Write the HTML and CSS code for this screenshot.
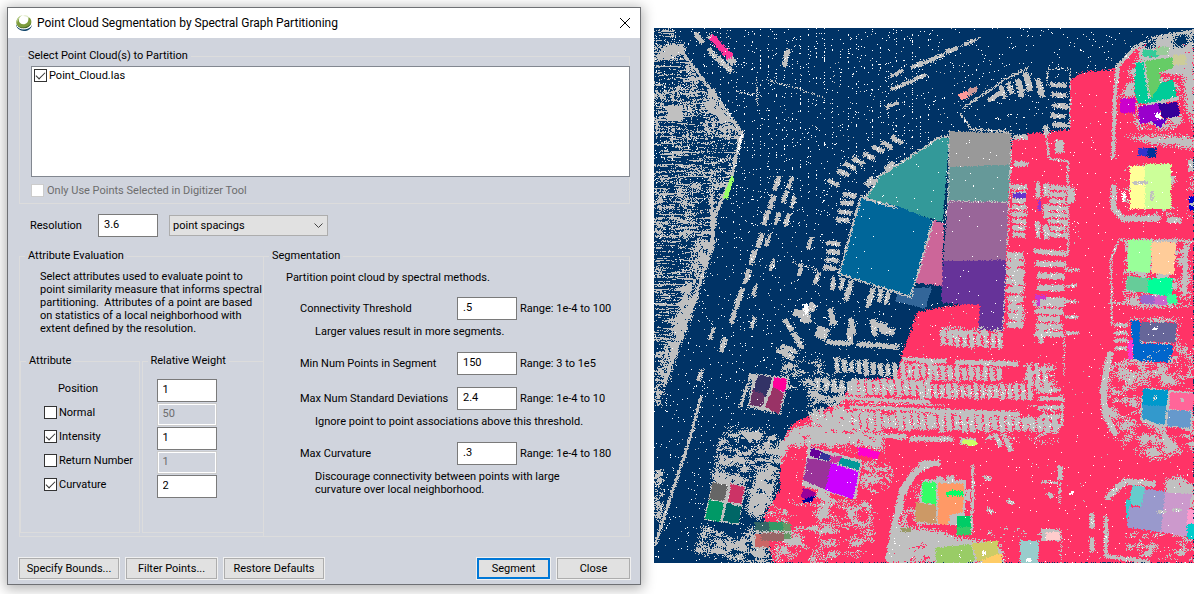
FILE: index.html
```html
<!DOCTYPE html>
<html lang="en">
<head>
<meta charset="utf-8">
<title>Point Cloud Segmentation by Spectral Graph Partitioning</title>
<link rel="stylesheet" href="styles.css">
</head>
<body>
<main class="workspace">
  <section class="dialog" role="dialog" aria-labelledby="dialog-title">
    <header class="titlebar">
      <svg class="logo" viewBox="0 0 16 16" aria-hidden="true">
        <path d="M0 9c1 3 4 5 8 5s7-2 8-4c-1 4-4 6-8 6S0 13 0 9z" fill="#12466b"/>
        <path d="M6 0C1 2-1 7 1 10c3 5 12 4 14-1 1-3 0-6-3-7 1 3 0 6-3 7-4 1-7-2-6-5 0-2 1-3 3-4z" fill="#7d9c3c"/>
        <path d="M7 0C2 1 0 5 1 9c0-3 2-7 6-9z" fill="#c3d59a"/>
        <path d="M7 1c3 0 5 1 6 3l-1-3C10 0 8 0 7 1z" fill="#dfe8c6"/>
        <path d="M1 10c3 4 11 3 14-2-1 6-11 8-14 2z" fill="#47682c"/>
        <path d="M1 11c3 4 10 4 14 0" fill="none" stroke="#fff"/>
      </svg>
      <h1 class="title" id="dialog-title">Point Cloud Segmentation by Spectral Graph Partitioning</h1>
      <button class="close" type="button" aria-label="Close window">
        <svg viewBox="0 0 10 10" aria-hidden="true"><path d="M0 0l10 10M10 0L0 10" stroke="#000" fill="none"/></svg>
      </button>
    </header>
    <form class="content">
      <fieldset class="group source">
        <legend>Select Point Cloud(s) to Partition</legend>
        <div class="list">
          <label class="check"><input type="checkbox" checked>Point_Cloud.las</label>
        </div>
        <label class="check disabled"><input type="checkbox" disabled>Only Use Points Selected in Digitizer Tool</label>
      </fieldset>

      <div class="resolution">
        <label for="resolution">Resolution</label>
        <input class="field" id="resolution" type="text" value="3.6">
        <select class="units" aria-label="Resolution units"><option>point spacings</option></select>
      </div>

      <div class="columns">
        <fieldset class="group evaluation">
          <legend>Attribute Evaluation</legend>
          <p class="intro">Select attributes used to evaluate point to<br>point similarity measure that informs spectral<br>partitioning.&nbsp; Attributes of a point are based<br>on statistics of a local neighborhood with<br>extent defined by the resolution.</p>
          <div class="tables">
            <fieldset class="group attributes">
              <legend>Attribute</legend>
              <label class="position" for="w-position">Position</label>
              <label class="check"><input type="checkbox">Normal</label>
              <label class="check"><input type="checkbox" checked>Intensity</label>
              <label class="check"><input type="checkbox">Return Number</label>
              <label class="check"><input type="checkbox" checked>Curvature</label>
            </fieldset>
            <fieldset class="group weights">
              <legend>Relative Weight</legend>
              <input class="field" id="w-position" type="text" value="1">
              <input class="field" type="text" value="50" aria-label="Normal weight" disabled>
              <input class="field" type="text" value="1" aria-label="Intensity weight">
              <input class="field" type="text" value="1" aria-label="Return number weight" disabled>
              <input class="field" type="text" value="2" aria-label="Curvature weight">
            </fieldset>
          </div>
        </fieldset>

        <fieldset class="group segmentation">
          <legend>Segmentation</legend>
          <p class="lead">Partition point cloud by spectral methods.</p>
          <div class="param">
            <label for="threshold">Connectivity Threshold</label>
            <input class="field" id="threshold" type="text" value=".5">
            <span>Range: 1e-4 to 100</span>
          </div>
          <p class="hint">Larger values result in more segments.</p>
          <div class="param spaced">
            <label for="min-points">Min Num Points in Segment</label>
            <input class="field" id="min-points" type="text" value="150">
            <span>Range: 3 to 1e5</span>
          </div>
          <div class="param spaced">
            <label for="max-dev">Max Num Standard Deviations</label>
            <input class="field" id="max-dev" type="text" value="2.4">
            <span>Range: 1e-4 to 10</span>
          </div>
          <p class="hint">Ignore point to point associations above this threshold.</p>
          <div class="param spaced">
            <label for="max-curve">Max Curvature</label>
            <input class="field" id="max-curve" type="text" value=".3">
            <span>Range: 1e-4 to 180</span>
          </div>
          <p class="hint">Discourage connectivity between points with large<br>curvature over local neighborhood.</p>
        </fieldset>
      </div>

      <footer class="actions">
        <button class="btn wide" type="button">Specify Bounds...</button>
        <button class="btn mid" type="button">Filter Points...</button>
        <button class="btn wide" type="button">Restore Defaults</button>
        <span class="spacer"></span>
        <button class="btn primary" type="button">Segment</button>
        <button class="btn" type="button">Close</button>
      </footer>
    </form>
  </section>
  <svg class="map" id="map" viewBox="654 28 540 535" shape-rendering="crispEdges" role="img" aria-label="Segmented point cloud"></svg>
</main>
<script src="map.js"></script>
</body>
</html>
```
FILE: styles.css
```css
* { box-sizing: border-box; }

body {
  margin: 0;
  background: #fff;
  color: #000;
  font: 11px/13px Roboto, "Noto Sans", sans-serif;
}

p, h1 { margin: 0; font-size: inherit; font-weight: normal; }

.workspace {
  display: grid;
  grid-template-columns: 634fr 540fr;
  gap: 13px;
  align-items: start;
  padding: 7px 8px 9px 7px;
}

.map { display: block; width: 100%; margin-top: 21px; }

.dialog {
  border: 1px solid #6e7074;
  background: #d0d4dd;
  box-shadow: 0 2px 12px 2px rgba(0, 0, 0, 0.3);
}

.titlebar {
  display: flex;
  align-items: center;
  height: 30px;
  padding: 0 10px 0 8px;
  background: #fff;
}

.logo { width: 16px; height: 16px; }

.title {
  flex: 1;
  margin-left: 5px;
  font-size: 12px;
  line-height: 16px;
}

.close {
  width: 10px;
  height: 10px;
  padding: 0;
  border: 0;
  background: none;
}

.close svg { display: block; width: 10px; height: 10px; }

.content { padding: 11px 10px 5px 11px; }

.group {
  --inset: 0px;
  min-width: 0;
  margin: 0;
  padding: 0 0 0 var(--inset);
  border: 1px solid #dcdcdc;
}

.group > legend {
  margin-left: calc(5px - var(--inset));
  padding: 0 3px;
  line-height: 14px;
}

.source {
  --inset: 11px;
  padding-top: 3px;
  padding-bottom: 6px;
}

.list {
  min-height: 111px;
  margin-right: -1px;
  padding: 2px;
  border: 1px solid #828790;
  background: #fff;
}

.check { display: flex; align-items: center; gap: 2px; }

.check input {
  appearance: none;
  width: 13px;
  height: 13px;
  margin: 0;
  border: 1px solid #333;
  background: #fff;
}

.check input:checked::before {
  content: "";
  display: block;
  width: 8px;
  height: 4px;
  margin: 2px 1px;
  border: solid #333;
  border-width: 0 0 1px 1px;
  transform: rotate(-45deg);
}

.check.disabled { margin-top: 7px; gap: 3px; color: #6d6d6d; }
.check.disabled input { border-color: #ccc; }

.field {
  width: 60px;
  height: 23px;
  padding: 0 5px 2px;
  border: 1px solid #7a7a7a;
  border-radius: 0;
  background: #fff;
  color: #000;
  font: inherit;
}

.field:disabled {
  width: 58px;
  height: 21px;
  margin: 1px;
  padding-left: 4px;
  border: 1px solid #fff;
  outline: 1px solid #ccc;
  background: #d0d4dd;
  color: #6d6d6d;
}

.resolution {
  display: flex;
  align-items: center;
  margin: 10px 0 12px;
  padding-left: 11px;
}

.resolution label { width: 68px; }

.units {
  appearance: none;
  width: 159px;
  height: 21px;
  margin-left: 11px;
  padding: 0 3px;
  border: 1px solid #adadad;
  border-radius: 0;
  background: #e1e1e1 url("data:image/svg+xml,%3Csvg xmlns='http://www.w3.org/2000/svg' width='9' height='6'%3E%3Cpath d='M.5.5l4 4 4-4' fill='none' stroke='%23444'/%3E%3C/svg%3E") no-repeat right 4px center;
  color: #000;
  font: inherit;
}

.columns { display: grid; grid-template-columns: 245fr 366fr; }

.evaluation { display: flex; flex-direction: column; }

.intro { padding: 7px 0 0 20px; white-space: nowrap; }

.tables {
  display: grid;
  grid-template-columns: 120fr 122fr;
  gap: 2px;
  margin-top: 19px;
  padding-bottom: 3px;
}

.attributes {
  --inset: 23px;
  display: grid;
  grid-auto-rows: 24px;
  align-items: center;
  align-content: start;
  min-height: 179px;
  padding-top: 8px;
}

.attributes > legend { margin-left: -18px; }

.position { padding-left: 14px; }

.weights {
  --inset: 14px;
  display: grid;
  grid-auto-rows: 24px;
  align-content: start;
  border-right: 0;
  padding-top: 11px;
}

.segmentation { --inset: 36px; border-left: 0; }
.lead { margin: 8px 0 13px -14px; }

.param { display: flex; align-items: center; }
.param label { width: 157px; white-space: nowrap; }
.param span { margin-left: 3px; white-space: nowrap; }
.param.spaced { margin-top: 12px; }
.hint { padding: 5px 0 2px 15px; white-space: nowrap; }

.actions {
  display: flex;
  gap: 7px;
  margin-top: 21px;
}

.btn {
  width: 73px;
  height: 21px;
  padding: 0;
  border: 1px solid #adadad;
  border-radius: 0;
  outline: 1px solid #f0f0f0;
  background: #e1e1e1;
  color: #000;
  font: inherit;
  white-space: nowrap;
}

.btn.wide { width: 100px; }
.btn.mid { width: 91px; }
.btn.primary { border: 2px solid #0078d7; }
.spacer { flex: 1; }
```
FILE: map.js
```js
// Terrain map: classified points are set cell by cell, then written as one SVG path per class.
const X0 = 654, Y0 = 28, W = 540, H = 535;
const cells = new Array(W * H).fill("#003366");
const GREY = "#c0c0c0", RED = "#ff3366", NAVY = "#003366", WHITE = "#ffffff";

function hash(x, y, s) {
  let h = Math.imul(x, 374761393) + Math.imul(y, 668265263) + Math.imul(s, 2147483647 - 918273);
  h = Math.imul(h ^ (h >>> 13), 1274126177);
  h = Math.imul(h ^ (h >>> 15), 2246822519);
  return ((h ^ (h >>> 16)) >>> 0) / 4294967296;
}
function noise(x, y, sx, sy) {
  const u = x / sx, v = y / sy, i = Math.floor(u), j = Math.floor(v), a = u - i, b = v - j;
  return (hash(i, j, 7) * (1 - a) + hash(i + 1, j, 7) * a) * (1 - b) +
    (hash(i, j + 1, 7) * (1 - a) + hash(i + 1, j + 1, 7) * a) * b;
}
function set(x, y, c) {
  x -= X0; y -= Y0;
  if (x >= 0 && y >= 0 && x < W && y < H) cells[y * W + x] = c;
}
function inside(p, x, y) {
  let r = false;
  for (let i = 0, j = p.length - 2; i < p.length; j = i, i += 2) {
    if ((p[i + 1] > y) !== (p[j + 1] > y) &&
      x < (p[j] - p[i]) * (y - p[i + 1]) / (p[j + 1] - p[i + 1]) + p[i]) r = !r;
  }
  return r;
}
function scan(p, pad, fn) {
  let a = 1e9, b = 1e9, c = 0, d = 0;
  for (let i = 0; i < p.length; i += 2) {
    a = Math.min(a, p[i]); c = Math.max(c, p[i]);
    b = Math.min(b, p[i + 1]); d = Math.max(d, p[i + 1]);
  }
  for (let y = Math.floor(b - pad); y <= d + pad; y++)
    for (let x = Math.floor(a - pad); x <= c + pad; x++) fn(x, y);
}
function poly(c, p, rough = 1.6) {
  scan(p, rough, (x, y) => {
    if (inside(p, x + 0.5 + (hash(x, y, 1) - 0.5) * rough, y + 0.5 + (hash(x, y, 2) - 0.5) * rough)) set(x, y, c);
  });
}
const box = (c, x, y, w, h) => poly(c, [x, y, x + w, y, x + w, y + h, x, y + h]);
function fuzz(c, p, density, sx = 5, sy = 3) {
  scan(p, 4, (x, y) => {
    const dx = (hash(x, y, 3) - 0.5) * 6, dy = (hash(x, y, 4) - 0.5) * 6;
    const n = noise(x, y, sx * 2, sy * 2) * 0.35 + noise(x + 91, y, sx, sy) * 0.4 + hash(x, y, 5) * 0.25;
    if (inside(p, x + dx, y + dy) && n < density) set(x, y, c);
  });
}
const fuzzBox = (x, y, w, h, d, sx, sy) => fuzz(GREY, [x, y, x + w, y, x + w, y + h, x, y + h], d, sx, sy);
function bar(x, y, len, w, deg, c = GREY) {
  const t = deg * Math.PI / 180, a = Math.cos(t) * len / 2, b = Math.sin(t) * len / 2;
  const m = -Math.sin(t) * w / 2, n = Math.cos(t) * w / 2;
  poly(c, [x - a - m, y - b - n, x + a - m, y + b - n, x + a + m, y + b + n, x - a + m, y - b + n], 2.4);
  if (c === GREY && hash(x | 0, y | 0, 9) > 0.4) {
    for (let k = 0; k < 4; k++) set(Math.round(x + (hash(k, x | 0, y | 0) - 0.5) * w), Math.round(y + (hash(k, y | 0, x | 0) - 0.5) * w), WHITE);
  }
}
function bars(x0, y0, x1, y1, n, len, w, deg) {
  for (let i = 0; i < n; i++) {
    const t = n > 1 ? i / (n - 1) : 0;
    bar(x0 + (x1 - x0) * t, y0 + (y1 - y0) * t, len * (0.8 + hash(i, x0 | 0, y0 | 0) * 0.35), w, deg);
  }
}
const each = (list, len, w, deg) => { for (let i = 0; i < list.length; i += 2) bar(list[i], list[i + 1], len, w, deg); };
function path(p, w, c = GREY) {
  for (let i = 0; i + 3 < p.length; i += 2) {
    const dx = p[i + 2] - p[i], dy = p[i + 3] - p[i + 1];
    bar((p[i] + p[i + 2]) / 2, (p[i + 1] + p[i + 3]) / 2, Math.hypot(dx, dy) + 1, w, Math.atan2(dy, dx) * 180 / Math.PI, c);
  }
}

// Ground classes
poly(RED, [1070,80, 1083,72, 1100,70, 1113,70, 1128,57, 1140,45, 1194,45, 1194,563, 773,563, 763,517, 780,490, 780,457, 783,440, 793,423, 840,403, 853,380, 897,377, 901,357, 917,313, 930,309, 990,300, 1012,140, 1033,133, 1070,130], 3);

// Return noise
scan([X0, Y0, X0 + W, Y0 + H], 0, (x, y) => {
  if (x >= X0 + W || y >= Y0 + H) return;
  const navy = cells[(y - Y0) * W + x - X0] === NAVY, r = hash(x, y, 11);
  const grid = y < 200 && x < 930 && x % 8 === 0 && hash(x, y, 12) < 0.12;
  if (r < (navy ? 0.011 : 0.002) || (navy && grid)) set(x, y, WHITE);
  else if (r < (navy ? 0.014 : 0.004)) set(x, y, GREY);
});

// Western scrub
const scrub = [654,28, 672,28, 684,52, 743,133, 732,175, 722,200, 712,230, 710,255, 695,300, 675,350, 664,390, 654,412];
fuzz(GREY, scrub, 0.42, 7, 1);
fuzz(GREY, [654,90, 700,80, 740,133, 700,160, 654,130], 0.41, 2, 6);
fuzz(GREY, [654,180, 725,165, 720,200, 690,240, 654,235], 0.42, 5, 3);
fuzz(GREY, [684,60, 742,133, 720,135, 690,85], 0.58);
fuzz(GREY, [695,240, 715,240, 690,320, 672,365, 658,410, 654,380, 680,300], 0.58, 4, 6);
fuzz(GREY, [654,45, 684,42, 684,54, 654,62], 0.7);
box(GREY, 667, 105, 16, 16);
box(GREY, 708, 89, 8, 9);
path([682,52, 715,95, 742,133, 736,155, 732,176, 715,215, 712,245, 693,305, 676,350, 664,385], 3);
path([742,134, 738,152], 2, WHITE);
path([712,195, 712,250], 4);
path([701,397, 690,438, 677,478, 655,545], 3);
fuzzBox(654, 470, 8, 50, 0.55);
poly("#99ff66", [732,176, 734,178, 728,199, 723,199, 726,188]);

// Vehicles on the dark ground
each([699,38, 712,53, 721,62, 728,68], 12, 5, 50);
bar(731, 60, 10, 7, 45); bar(712, 38, 8, 6, 45);
bar(721, 47, 29, 7, 46, "#ff3399");
bar(786, 58, 18, 5, -75);
each([897,73, 917,65, 926,62, 892,105], 14, 4, -25);
each([897,87, 909,82, 920,77], 13, 4, -18);
each([929,61, 938,57, 952,50, 970,42], 12, 4, -22); path([920,65, 980,38], 1);
path([768,80, 790,86, 825,98], 1); path([757,80, 757,104], 1); path([736,92, 758,95], 1);
each([833,183, 843,173, 850,166, 858,161, 869,156, 878,149, 887,145, 897,140], 13, 5, 28);
each([850,195, 847,203, 845,212, 843,220, 833,243, 833,252, 832,260, 830,268], 14, 5, 5);
each([890,167, 870,182], 11, 7, -45);
each([777,183, 772,202, 766,218, 760,240, 753,257, 747,277, 740,295, 738,302, 733,317, 723,345], 15, 5, -72);
each([790,183, 785,197, 777,218, 768,240, 772,265, 755,290, 753,323, 712,333], 13, 4, -72);
each([793,202, 787,220, 810,243, 800,270, 817,278, 700,375], 13, 4, -72);
path([793,262, 818,270], 1);
each([833,283, 842,284, 850,287, 872,294, 880,296, 887,298, 869,301, 847,295], 13, 5, -82);
bar(805, 316, 14, 11, 80); bar(797, 313, 8, 7, 20); bar(812, 307, 8, 8, 30);
bar(806, 309, 11, 5, 85, WHITE);
bar(822, 333, 13, 12, 20);
each([832,317, 852,327, 874,328, 850,336], 17, 6, 80);
bar(880, 325, 14, 6, 10); bar(887, 331, 16, 7, 10);
path([827,342, 850,344], 5); path([857,344, 898,347], 5);
each([788,325, 797,338, 799,343], 14, 5, 55);
each([787,348, 788,356, 782,352, 792,351], 12, 5, 20);
bars(837,365, 895,371, 9, 15, 5, 85);
fuzzBox(782, 360, 40, 28, 0.44);
fuzzBox(808, 375, 34, 45, 0.5);
bars(818,384, 850,388, 5, 15, 5, 85);
bars(815,416, 835,418, 4, 16, 5, 90);
each([1020,88, 1028,82, 1040,88], 19, 6, 75);
each([1010,88, 1003,92], 13, 5, 70);
each([992,98, 997,95], 11, 4, -35);
each([1058,85, 1059,95, 1060,106, 1058,116, 1060,125], 16, 5, 2);
path([1028,68, 1004,80, 963,108], 2); path([960,113, 970,128], 2); path([970,129, 1011,132], 2);
path([1047,85, 1047,69, 1070,69, 1070,130], 1);
bar(1046, 130, 10, 6, 80);
poly("#ff9999", [958,94, 968,90, 968,98, 960,100]); poly("#cc9999", [968,89, 977,86, 977,92, 969,96]);

// Main complex
poly("#339999", [949,138, 938,138, 930,143, 880,176, 866,197, 895,208, 943,222]);
poly("#999999", [949,131, 1011,133, 1010,166, 949,167]);
poly("#669999", [949,167, 1010,165, 1008,202, 948,200]);
poly("#996699", [948,200, 1008,202, 1006,261, 943,262]);
poly("#663399", [943,261, 1006,260, 1003,331, 978,331, 980,305, 941,303]);
poly("#006699", [861,197, 897,206, 933,220, 911,296, 838,275]);
poly("#cc6699", [934,220, 944,224, 942,286, 916,283]);
poly("#336699", [912,288, 932,287, 925,309, 895,301, 897,294, 911,297]);
path([948,136, 936,139, 925,147, 880,176, 866,197], 2);
path([861,197, 897,208], 2); path([861,197, 850,235, 839,274, 911,297, 933,221], 2);
path([949,131, 948,201, 944,222], 1); path([1012,133, 1009,202, 1007,260, 1003,331], 1);
path([948,201, 1008,202], 1);

// Parking on the red ground
fuzzBox(1009, 253, 14, 72, 0.52);
bars(1015,255, 1015,325, 9, 17, 6, 0);
bars(1019,187, 1019,235, 8, 15, 5, 2);
each([1021,137, 1021,164], 14, 5, 0);
box(GREY, 1055,140,9,13);
path([1046,130, 1049,159, 1068,161, 1068,255], 2);
bars(1058,188, 1058,235, 8, 18, 5, 3);
bars(1038,190, 1038,230, 2, 18, 5, 88); bars(1046,190, 1046,232, 3, 16, 6, 88);
bar(1071,195,15,7,90);
path([1034,251, 1066,254], 5);
bars(1051,264, 1051,300, 4, 30, 6, 2);
bars(1049,304, 1049,334, 5, 28, 6, 2);
fuzzBox(1066,215,12,30,0.25); bars(1072,270,1072,333,5,13,3,0);
path([1041,330, 1041,343], 5);
path([1064,335, 1064,375], 1);
fuzzBox(942, 328, 58, 8, 0.6);
bars(943,338, 1000,341, 9, 16, 5, 85);
path([920,361, 946,361], 5); path([955,362, 1018,364], 5);
path([902,359, 930,360], 4);
bars(903,371, 930,371, 5, 16, 5, 88);
bars(936,373, 999,374, 10, 15, 5, 86);
bars(855,387, 928,388, 11, 16, 6, 86);
bars(922,391, 1030,392, 17, 16, 5, 86);
path([840,398, 930,402], 4); path([850,407, 930,410], 4);
path([930,411, 1019,414], 5); path([850,403, 944,405], 1);
fuzzBox(847,410,80,16,0.42);
bars(849,420, 930,422, 12, 17, 6, 86);
bars(934,422, 1055,425, 17, 17, 6, 86);
path([1063,395, 1062,425, 1035,438], 2);
fuzzBox(1023,364,32,62,0.42);
bars(1050,390, 1050,425, 5, 22, 4, 0);
bars(1030,375, 1045,378, 3, 26, 4, 84);
fuzzBox(985,430,75,12,0.36);
bars(998,440, 1008,444, 2, 16, 5, 65);
path([884,436, 906,437], 5); path([910,439, 930,439, 953,439], 5);
box(GREY, 960,438,16,7);
poly("#ccff66", [963,439, 977,441, 977,446, 962,444]);
box("#6633cc", 1013,193,13,5); box("#9933cc", 1038,200,3,11); box("#cc33cc", 1035,295,11,4); box("#cc33cc", 1037,299,3,7);

// South-west scrub and houses
fuzz(GREY, [830,405, 848,408, 850,428, 883,433, 883,450, 860,445, 788,446, 778,470, 772,500, 758,520, 745,510, 757,470, 785,440, 790,428, 815,422], 0.68);
fuzz(GREY, [725,428, 792,430, 780,460, 772,490, 760,520, 745,490, 712,490, 717,445], 0.48, 4, 3);
fuzz(GREY, [712,468, 740,475, 748,490, 712,484], 0.68);
fuzz(GREY, [703,525, 738,540, 750,525, 770,548, 772,563, 740,561, 692,552], 0.55);
fuzz(GREY, [764,505, 830,495, 880,510, 870,545, 850,563, 775,563], 0.4, 7, 4);
fuzz(GREY, [862,462, 880,458, 892,470, 888,488, 870,492, 858,480], 0.5, 3, 2);
fuzz(GREY, [845,505, 870,500, 872,525, 850,530], 0.52);
fuzz(GREY, [783,432, 870,440, 865,452, 785,458], 0.42);
poly(GREY, [752,374, 790,377, 780,415, 748,407], 3);
path([751,374, 740,408], 3);
poly("#333366", [758,375, 772,377, 766,397, 753,391]); poly("#ff0099", [774,377, 787,379, 785,392, 773,388]);
poly("#663366", [753,390, 765,395, 762,407, 750,405]); poly("#993366", [773,387, 784,393, 779,414, 765,407]);
poly(GREY, [712,481, 746,486, 739,525, 704,520]);
poly("#666666", [713,482, 728,485, 724,501, 709,499]); poly("#cc3366", [731,484, 745,487, 741,504, 728,502]);
poly("#009966", [709,500, 724,503, 720,522, 705,519]); poly("#006666", [727,503, 742,507, 738,524, 723,521]);
box("#336666", 755,522,14,9); box("#339966", 769,522,15,9); box("#669966", 783,523,8,16);
box("#cc6666", 755,534,14,13); box("#996666", 761,533,23,8); path([755,532, 790,532], 2);
poly(GREY, [808,446, 862,460, 856,500, 802,486]);
poly("#993399", [808,458, 832,462, 826,490, 803,480]); poly("#cc00ff", [831,463, 859,472, 853,499, 825,490]);
poly("#660099", [811,448, 822,452, 818,459, 810,455]); poly("#333399", [822,452, 832,456, 829,461, 819,459]);
box("#cc3399", 830,456,12,7); poly("#009999", [841,458, 861,463, 858,470, 839,464]);
poly("#ff00cc", [858,447, 880,452, 877,459, 858,455]);
poly("#990099", [803,488, 816,492, 813,500, 801,497]); poly("#000099", [802,500, 816,495, 812,502, 803,502]);
bar(823, 496, 13, 9, 30);

// South cul-de-sac
fuzz(GREY, [886,563, 893,522, 912,527, 935,530, 958,537, 1000,545, 1004,563], 0.75);
path([889,560, 896,520, 903,490, 915,472, 932,463], 7);
path([920,464, 940,463], 6); path([973,465, 973,500, 971,533], 3);
fuzz(GREY, [905,495, 918,485, 925,530, 900,530], 0.42);
poly(GREY, [922,480, 966,480, 965,515, 956,525, 916,524]); box(GREY, 966,489,4,12); each([940,480, 950,479],8,6,0);
poly("#33ff66", [922,482, 936,482, 936,505, 922,502]); poly("#cc9966", [916,502, 936,505, 936,524, 915,521]);
poly("#ff9966", [938,483, 964,484, 963,512, 950,515, 948,525, 938,524]); poly("#00ff66", [946,493, 952,490, 963,491, 964,496, 946,496]);
box("#00cc66", 957,516,14,11); box("#33cc66", 957,527,14,8); box("#999966", 901,528,10,4);
poly("#99cc66", [936,548, 971,544, 975,560, 970,563, 936,563]); poly("#cccc66", [971,543, 998,541, 998,558, 978,562]);
poly("#ffcc66", [982,560, 1002,553, 1002,564, 982,564]); poly("#99cccc", [1020,540, 1039,541, 1038,564, 1020,564]);
bar(984,553,4,4,0,WHITE); bar(1029,560,5,4,0,WHITE);
box(GREY, 1041,529,19,12); box("#ffcccc", 1046,532,14,8);
path([1060,466, 1060,479], 5); path([1042,482, 1058,483], 2); path([1060,483, 1060,503], 2); path([1061,530, 1061,563], 1);
each([1092,521, 1092,545],15,5,88); each([987,478, 990,511, 1050,495, 1011,502],7,4,30);
box(WHITE, 1070,491,3,4); fuzzBox(985,528,60,7,0.35);

// Eastern houses
path([1113,158, 1115,95, 1118,66, 1135,48, 1155,38, 1194,31], 4);
fuzz(GREY, [1137,50, 1155,37, 1194,31, 1194,130, 1186,110, 1183,75, 1173,75, 1140,62], 0.7, 5, 4);
fuzz(GREY, [1133,60, 1180,60, 1182,125, 1160,130, 1138,128, 1118,100], 0.52);
fuzz(NAVY, [1143,42, 1154,38, 1154,46, 1145,48], 0.8); fuzz(NAVY, [1172,36, 1188,34, 1186,46, 1174,46], 0.6);
path([1138,68, 1146,102], 4); path([1148,104, 1178,98], 4);
box("#33cc99", 1143,50,15,7); box("#99cc99", 1156,47,13,8); box("#cccc99", 1173,55,13,10);
poly("#00cc99", [1136,62, 1144,62, 1148,92, 1152,98, 1162,82, 1173,80, 1177,97, 1148,103, 1138,104, 1134,88]);
poly("#66cc66", [1145,61, 1172,57, 1173,68, 1160,72, 1160,85, 1152,98, 1149,92]);
path([1144,62, 1149,98], 2);
box("#cc00cc", 1120,98,15,15); poly("#9900cc", [1138,107, 1160,103, 1160,120, 1140,124]);
poly("#330099", [1158,104, 1177,102, 1180,116, 1163,119]); poly("#6600cc", [1150,121, 1168,119, 1160,128]); bar(1158,116,6,5,0,WHITE);
fuzz(GREY, [1123,136, 1165,135, 1194,137, 1194,148, 1150,143], 0.75);
box("#3333cc", 1138,148,9,8); box("#003399", 1147,148,9,9);
path([1114,185, 1113,207, 1123,219, 1160,218], 6); bar(1174,220,14,6,0); bar(1124,197,10,4,90,WHITE);
fuzzBox(1125,165,50,48,0.4);
box("#ffff99", 1130,166,16,43); box("#ccff99", 1145,164,26,45); bar(1140,183,14,3,0); bar(1152,196,10,3,90);
box("#0000cc", 1189,196,5,14); bar(1191,165,12,6,80); fuzzBox(1188,175,6,40,0.45);
path([1112,325, 1111,258, 1119,240, 1194,241], 2); fuzzBox(1124,240,66,67,0.5);
path([1186,245, 1184,295], 5);
poly("#99ff99", [1129,240, 1152,240, 1150,273, 1127,271]); poly("#ffcc99", [1151,242, 1176,242, 1174,275, 1152,273]);
poly("#66cc99", [1127,276, 1149,278, 1148,293, 1126,290]); poly("#00ff99", [1148,279, 1172,277, 1172,297, 1148,293]);
box("#9966cc", 1140,295,14,9); box("#cc66cc", 1154,296,13,9); box("#33ff99", 1167,294,10,10);
bars(1121,325, 1121,348, 4, 15, 4, 0); path([1110,303, 1140,304], 2);
fuzzBox(1131,318,48,46,0.5);
poly("#0066cc", [1131,321, 1140,320, 1141,343, 1173,345, 1171,362, 1134,361]);
poly("#666699", [1141,322, 1177,323, 1175,343, 1139,341]); box("#ff33cc", 1128,340,5,20);
bar(1155,328,4,3,0,WHITE);
path([1110,352, 1107,368, 1103,390, 1105,415, 1116,435], 6);
fuzz(GREY, [1100,365, 1130,358, 1194,343, 1194,450, 1160,460, 1125,450, 1105,420], 0.44, 5, 4);
fuzz(GREY, [1135,435, 1165,428, 1180,450, 1150,460], 0.58); fuzzBox(1120,362,30,24,0.5);
poly(GREY, [1143,388, 1194,392, 1192,430, 1140,421]);
poly("#0099cc", [1143,389, 1168,390, 1167,406, 1142,405]); poly("#3399cc", [1142,405, 1167,406, 1164,425, 1142,419]);
poly("#ff6699", [1170,392, 1194,393, 1193,411, 1169,409]); poly("#6699cc", [1168,410, 1191,411, 1190,428, 1167,426]);
bar(1155,398,5,2,90); bar(1182,400,5,3,90);
path([1106,499, 1125,481, 1155,484], 6); path([1106,516, 1106,556, 1150,562], 4);
fuzz(GREY, [1165,480, 1180,476, 1194,486, 1194,510, 1165,500], 0.75); fuzzBox(1125,528,69,35,0.4);
poly("#66cccc", [1133,485, 1145,487, 1142,507, 1128,504]); box("#33cccc", 1126,500,5,18);
poly("#9999cc", [1145,489, 1165,491, 1162,533, 1127,527, 1129,507, 1141,507]);
poly("#cc99cc", [1165,492, 1191,494, 1187,537, 1161,532]); box("#ff99cc", 1187,510,7,14); box("#00cccc", 1187,524,7,15);
each([1162,512, 1177,510],9,3,0);

scan([X0, Y0, X0 + W, Y0 + H], 0, (x, y) => { if (hash(x, y, 21) < 0.003) set(x, y, WHITE); });

// Horizontal runs of equal class become path segments
const runs = new Map();
for (let y = 0; y < H; y++) {
  for (let x = 0; x < W;) {
    const c = cells[y * W + x];
    let e = x + 1;
    while (e < W && cells[y * W + e] === c) e++;
    if (!runs.has(c)) runs.set(c, []);
    runs.get(c).push(`M${x + X0} ${y + Y0}h${e - x}v1h${x - e}z`);
    x = e;
  }
}
const svg = document.getElementById("map");
for (const [c, d] of runs) {
  const el = document.createElementNS("http://www.w3.org/2000/svg", "path");
  el.setAttribute("fill", c);
  el.setAttribute("d", d.join(""));
  svg.appendChild(el);
}
```
